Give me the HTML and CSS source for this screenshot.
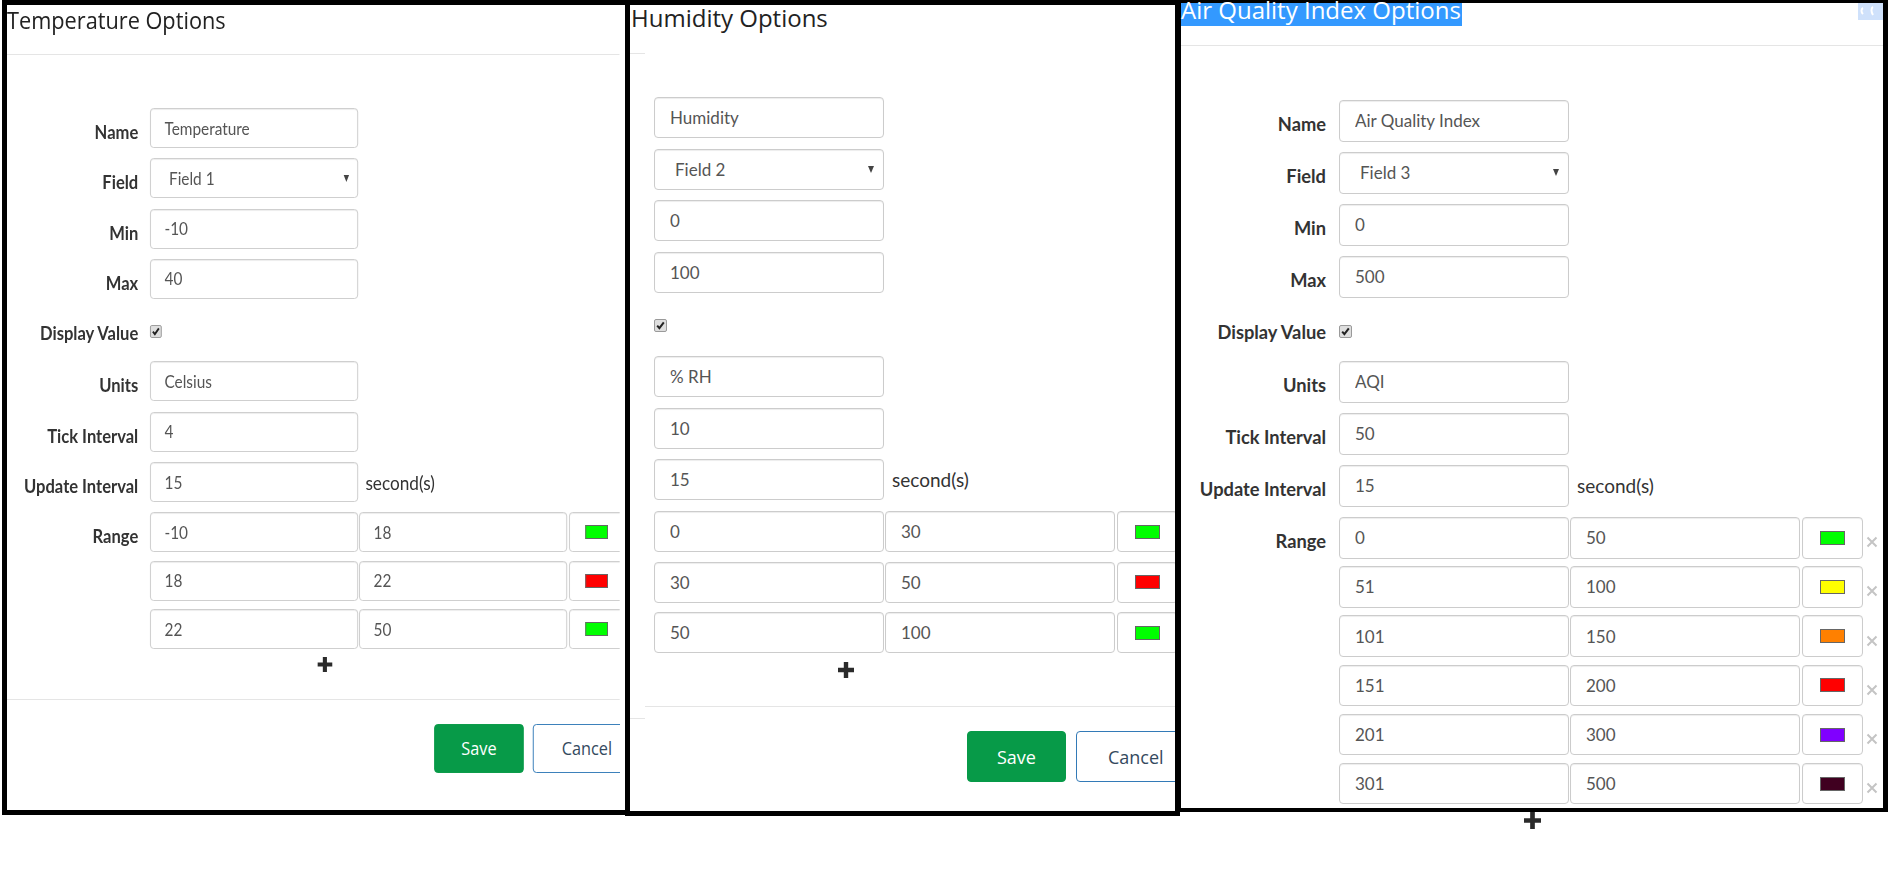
FILE: index.html
```html
<!DOCTYPE html>
<html lang="en">
<head>
<meta charset="utf-8">
<title>Widget Options</title>
<link rel="stylesheet" href="styles.css">
</head>
<body>
<div class="board">

  <section class="panel p1">
    <div class="inner">
      <header class="head"><h2 class="title">Temperature Options</h2></header>
      <div class="form">
        <div class="row"><span class="lbl">Name</span><input class="input" value="Temperature"></div>
        <div class="row"><span class="lbl">Field</span><div class="input select"><span>Field 1</span><span class="caret"></span></div></div>
        <div class="row"><span class="lbl">Min</span><input class="input" value="-10"></div>
        <div class="row"><span class="lbl">Max</span><input class="input" value="40"></div>
        <div class="row check-row"><span class="lbl">Display Value</span><span class="check"><svg viewBox="0 0 11 11" width="11" height="11"><path d="M2.2 5.6 L4.4 8.2 L8.8 2.4" fill="none" stroke="#222" stroke-width="2"/></svg></span></div>
        <div class="row"><span class="lbl">Units</span><input class="input" value="Celsius"></div>
        <div class="row"><span class="lbl">Tick Interval</span><input class="input" value="4"></div>
        <div class="row"><span class="lbl">Update Interval</span><input class="input" value="15"><span class="suffix">second(s)</span></div>
        <div class="row range"><span class="lbl">Range</span><input class="input" value="-10"><input class="input" value="18"><span class="color-box"><span class="sw sw-green"></span></span></div>
        <div class="row range"><span class="lbl"></span><input class="input" value="18"><input class="input" value="22"><span class="color-box"><span class="sw sw-red"></span></span></div>
        <div class="row range"><span class="lbl"></span><input class="input" value="22"><input class="input" value="50"><span class="color-box"><span class="sw sw-green"></span></span></div>
      </div>
      <div class="add"><svg viewBox="0 0 16 16" preserveAspectRatio="none"><path d="M5.8 0h4.4v5.8H16v4.4h-5.8V16H5.8v-5.8H0V5.8h5.8z" fill="#2b2b2b"/></svg></div>
      <div class="foot-line"></div>
      <div class="actions"><button class="btn save">Save</button><button class="btn cancel">Cancel</button></div>
    </div>
  </section>

  <section class="panel p2">
    <div class="inner">
      <header class="head"><h2 class="title">Humidity Options</h2></header>
      <div class="stub"></div>
      <div class="form">
        <div class="row"><input class="input" value="Humidity"></div>
        <div class="row"><div class="input select"><span>Field 2</span><span class="caret"></span></div></div>
        <div class="row"><input class="input" value="0"></div>
        <div class="row"><input class="input" value="100"></div>
        <div class="row check-row"><span class="check"><svg viewBox="0 0 11 11" width="11" height="11"><path d="M2.2 5.6 L4.4 8.2 L8.8 2.4" fill="none" stroke="#222" stroke-width="2"/></svg></span></div>
        <div class="row"><input class="input" value="% RH"></div>
        <div class="row"><input class="input" value="10"></div>
        <div class="row"><input class="input" value="15"><span class="suffix">second(s)</span></div>
        <div class="row range"><input class="input" value="0"><input class="input" value="30"><span class="color-box"><span class="sw sw-green"></span></span></div>
        <div class="row range"><input class="input" value="30"><input class="input" value="50"><span class="color-box"><span class="sw sw-red"></span></span></div>
        <div class="row range"><input class="input" value="50"><input class="input" value="100"><span class="color-box"><span class="sw sw-green"></span></span></div>
      </div>
      <div class="add"><svg viewBox="0 0 16 16" preserveAspectRatio="none"><path d="M5.8 0h4.4v5.8H16v4.4h-5.8V16H5.8v-5.8H0V5.8h5.8z" fill="#2b2b2b"/></svg></div>
      <div class="foot-line"></div>
      <div class="stub stub-foot"></div>
      <div class="actions"><button class="btn save">Save</button><button class="btn cancel">Cancel</button></div>
    </div>
  </section>

  <section class="panel p3">
    <div class="inner">
      <header class="head"><h2 class="title">Air Quality Index Options</h2><span class="sel-icon"><svg viewBox="0 0 25 17" width="25" height="17"><path d="M5 5c-2 1-2 4 0 6M15 4c-2 1-2 5 0 8" fill="none" stroke="#fff" stroke-width="2"/></svg></span></header>
      <div class="form">
        <div class="row"><span class="lbl">Name</span><input class="input" value="Air Quality Index"></div>
        <div class="row"><span class="lbl">Field</span><div class="input select"><span>Field 3</span><span class="caret"></span></div></div>
        <div class="row"><span class="lbl">Min</span><input class="input" value="0"></div>
        <div class="row"><span class="lbl">Max</span><input class="input" value="500"></div>
        <div class="row check-row"><span class="lbl">Display Value</span><span class="check"><svg viewBox="0 0 11 11" width="11" height="11"><path d="M2.2 5.6 L4.4 8.2 L8.8 2.4" fill="none" stroke="#222" stroke-width="2"/></svg></span></div>
        <div class="row"><span class="lbl">Units</span><input class="input" value="AQI"></div>
        <div class="row"><span class="lbl">Tick Interval</span><input class="input" value="50"></div>
        <div class="row"><span class="lbl">Update Interval</span><input class="input" value="15"><span class="suffix">second(s)</span></div>
        <div class="row range"><span class="lbl">Range</span><input class="input" value="0"><input class="input" value="50"><span class="color-box"><span class="sw sw-green"></span></span><span class="del"><svg viewBox="0 0 12 12"><path d="M1.5 1.5l9 9M10.5 1.5l-9 9" stroke="#c4c4c4" stroke-width="2"/></svg></span></div>
        <div class="row range"><span class="lbl"></span><input class="input" value="51"><input class="input" value="100"><span class="color-box"><span class="sw sw-yellow"></span></span><span class="del"><svg viewBox="0 0 12 12"><path d="M1.5 1.5l9 9M10.5 1.5l-9 9" stroke="#c4c4c4" stroke-width="2"/></svg></span></div>
        <div class="row range"><span class="lbl"></span><input class="input" value="101"><input class="input" value="150"><span class="color-box"><span class="sw sw-orange"></span></span><span class="del"><svg viewBox="0 0 12 12"><path d="M1.5 1.5l9 9M10.5 1.5l-9 9" stroke="#c4c4c4" stroke-width="2"/></svg></span></div>
        <div class="row range"><span class="lbl"></span><input class="input" value="151"><input class="input" value="200"><span class="color-box"><span class="sw sw-red"></span></span><span class="del"><svg viewBox="0 0 12 12"><path d="M1.5 1.5l9 9M10.5 1.5l-9 9" stroke="#c4c4c4" stroke-width="2"/></svg></span></div>
        <div class="row range"><span class="lbl"></span><input class="input" value="201"><input class="input" value="300"><span class="color-box"><span class="sw sw-purple"></span></span><span class="del"><svg viewBox="0 0 12 12"><path d="M1.5 1.5l9 9M10.5 1.5l-9 9" stroke="#c4c4c4" stroke-width="2"/></svg></span></div>
        <div class="row range"><span class="lbl"></span><input class="input" value="301"><input class="input" value="500"><span class="color-box"><span class="sw sw-maroon"></span></span><span class="del"><svg viewBox="0 0 12 12"><path d="M1.5 1.5l9 9M10.5 1.5l-9 9" stroke="#c4c4c4" stroke-width="2"/></svg></span></div>
      </div>
      <div class="add"><svg viewBox="0 0 16 16" preserveAspectRatio="none"><path d="M5.8 0h4.4v5.8H16v4.4h-5.8V16H5.8v-5.8H0V5.8h5.8z" fill="#2b2b2b"/></svg></div>
    </div>
  </section>

</div>
</body>
</html>
```

FILE: styles.css
```css
* { box-sizing: border-box; }

html, body {
  margin: 0;
  padding: 0;
  background: #fff;
}

body {
  width: 1888px;
  height: 879px;
  overflow: hidden;
  font-family: Lato, "Liberation Sans", sans-serif;
  color: #333;
}

.board {
  display: flex;
  align-items: flex-start;
}

/* ---------- panels ---------- */
.panel {
  flex: none;
  border: 5px solid #000;
  background: #fff;
  position: relative;
}

.p1 {
  margin-left: 2px;
  width: 628px;
  height: 815px;
  overflow-x: clip;
}

.p2 {
  margin-left: -5px;
  width: 555px;
  height: 816px;
  overflow-x: clip;
}

.p3 {
  width: 708px;
  height: 812px;
  border-width: 3px 5px 4px 1px;
}

.inner {
  display: flex;
  flex-direction: column;
  height: 100%;
}

/* first panel is a horizontally squeezed capture */
.p1 .inner {
  width: 677px;
  transform: scaleX(0.905);
  transform-origin: 0 0;
  overflow-x: clip;
}

/* ---------- header ---------- */
.head {
  flex: none;
  display: flex;
  justify-content: space-between;
  align-items: flex-start;
}

.p1 .head { height: 50px; border-bottom: 1px solid #e5e5e5; }
.p2 .head { height: 48px; }
.p3 .head { height: 43px; border-bottom: 1px solid #e5e5e5; }

.title {
  margin: 0;
  font-family: "Open Sans", "Liberation Sans", sans-serif;
  font-weight: 400;
  font-size: 24px;
  line-height: 24px;
  color: #222;
  white-space: nowrap;
}

.p1 .title { padding-top: 2.7px; }
.p2 .title { padding-top: 0.7px; margin-left: 1px; }
.p3 .title {
  line-height: 14px;
  padding: 0 1px 9px 0;
  background: #3399ff;
  color: #fff;
}

.sel-icon {
  flex: none;
  width: 25px;
  height: 17px;
  background: #cfe1fb;
}
.sel-icon svg { display: block; }

.stub {
  flex: none;
  width: 15px;
  height: 1px;
  background: #e5e5e5;
}

/* ---------- form ---------- */
.form {
  flex: none;
  display: flex;
  flex-direction: column;
}

.p1 .form { padding-top: 53px; --h: 40px; --g: 10.3px; --d: 42px; --rg: 8.5px; --ck: 15.8px; }
.p2 .form { padding-top: 43px; padding-left: 24px; --h: 41px; --g: 10.7px; --d: 41.5px; --rg: 9.5px; --ck: 15.2px; }
.p3 .form { padding-top: 54px; --h: 41.5px; --g: 10.5px; --d: 42.5px; --rg: 7.7px; --ck: 17px; }

.row {
  flex: none;
  display: flex;
  align-items: center;
  height: var(--h);
}

.row + .row { margin-top: var(--g); }
.range + .range { margin-top: var(--rg); }

.check-row {
  height: var(--d);
  align-items: flex-start;
}

.lbl {
  flex: none;
  align-self: flex-start;
  width: 145px;
  margin-right: 13px;
  padding-top: 14px;
  text-align: right;
  font-weight: 700;
  font-size: 18.3px;
  line-height: 20px;
  color: #333;
  white-space: nowrap;
}

.input {
  flex: none;
  -webkit-appearance: none;
  appearance: none;
  margin: 0;
  width: 230px;
  height: 100%;
  padding: 0 15px;
  border: 1px solid #ccc;
  border-radius: 4px;
  background: #fff;
  box-shadow: inset 0 1px 1px rgba(0, 0, 0, 0.075);
  font-family: Lato, "Liberation Sans", sans-serif;
  font-size: 17px;
  color: #555;
  outline: none;
}

.select {
  display: flex;
  align-items: center;
  padding: 0 9px 0 20px;
}

.caret {
  margin-left: auto;
  width: 0;
  height: 0;
  border-left: 3.5px solid transparent;
  border-right: 3.5px solid transparent;
  border-top: 7px solid #444;
}

.check {
  flex: none;
  margin-top: var(--ck);
  width: 13px;
  height: 13px;
  border: 1px solid #9a9a9a;
  border-radius: 2px;
  background: #dedede;
}
.check svg { display: block; }

.suffix {
  flex: none;
  margin-left: 8px;
  font-size: 19px;
  color: #333;
  white-space: nowrap;
}

.range .input + .input { margin-left: 1px; }

.color-box {
  flex: none;
  width: 61px;
  height: 100%;
  margin-left: 2px;
  border: 1px solid #ccc;
  border-radius: 4px;
  box-shadow: inset 0 1px 1px rgba(0, 0, 0, 0.075);
  display: flex;
  align-items: center;
  justify-content: center;
}

.sw {
  width: 25px;
  height: 14px;
  border: 1px solid #666;
}

.sw-green { background: #00ff00; }
.sw-red { background: #ff0000; }
.sw-yellow { background: #ffff00; }
.sw-orange { background: #ff8000; }
.sw-purple { background: #8000ff; }
.sw-maroon { background: #400020; }

.del {
  flex: none;
  margin-left: 3px;
  margin-top: 9px;
  width: 13px;
  height: 12px;
}
.del svg { display: block; width: 12px; height: 12px; }

/* ---------- add / footer ---------- */
.add { flex: none; display: flex; }
.add svg { display: block; }

.p1 .add { margin-top: 7.6px; margin-left: 343px; }
.p1 .add svg { width: 16.5px; height: 15px; }
.p2 .add { margin-top: 9px; margin-left: 208px; }
.p2 .add svg { width: 16px; height: 16px; }
.p3 .add { margin-top: 7.5px; margin-left: 343px; }
.p3 .add svg { width: 17px; height: 17px; }

.foot-line {
  flex: none;
  height: 1px;
  background: #e5e5e5;
}
.p1 .foot-line { margin-top: 27px; }
.p2 .foot-line { margin-top: 28px; margin-left: 15px; }
.stub-foot { margin-top: 11px; }

.actions {
  flex: none;
  display: flex;
  gap: 10px;
}
.p1 .actions { margin-top: 24px; margin-left: 472px; height: 49px; }
.p2 .actions { margin-top: 12px; margin-left: 337px; height: 51px; }

.btn {
  flex: none;
  height: 100%;
  margin: 0;
  padding: 0 29px;
  border-radius: 4px;
  font-family: "Open Sans", "Liberation Sans", sans-serif;
  font-size: 18px;
  white-space: nowrap;
}

.save {
  background: #079a48;
  border: 1px solid #079a48;
  color: #fff;
}

.cancel {
  background: #fff;
  border: 1px solid #337ab7;
  color: #34495e;
  padding: 0 31px;
}
```
